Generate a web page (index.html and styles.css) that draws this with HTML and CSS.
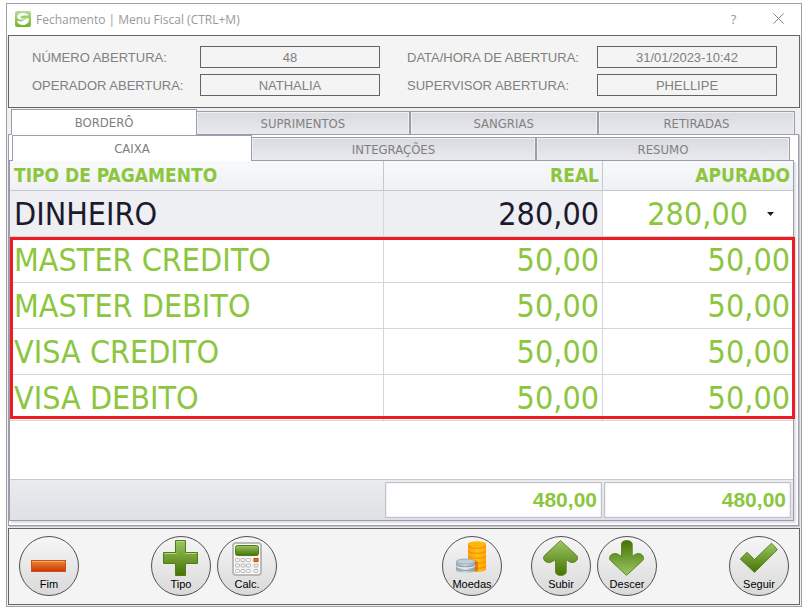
FILE: index.html
```html
<!DOCTYPE html>
<html lang="pt-BR">
<head>
  <meta charset="UTF-8">
  <meta name="viewport" content="width=device-width, initial-scale=1.0">
  <title>Fechamento | Menu Fiscal</title>
  <link rel="stylesheet" href="styles.css">
</head>
<body>

<!-- Shared icon gradients -->
<svg class="defs" width="0" height="0" aria-hidden="true">
  <defs>
    <linearGradient id="green" x1="0" y1="0" x2="0" y2="1">
      <stop offset="0" stop-color="#9cc764"/>
      <stop offset="1" stop-color="#457203"/>
    </linearGradient>
    <linearGradient id="green-up" x1="0" y1="0" x2="0" y2="1">
      <stop offset="0" stop-color="#457203"/>
      <stop offset="1" stop-color="#9cc764"/>
    </linearGradient>
    <linearGradient id="orange" x1="0" y1="0" x2="0" y2="1">
      <stop offset="0" stop-color="#f08a34"/>
      <stop offset="1" stop-color="#c93507"/>
    </linearGradient>
    <linearGradient id="logo" x1="0" y1="0" x2="0" y2="1">
      <stop offset="0" stop-color="#b9dc96"/>
      <stop offset="1" stop-color="#6fb52c"/>
    </linearGradient>
    <linearGradient id="silver" x1="0" y1="0" x2="1" y2="0">
      <stop offset="0" stop-color="#9fb0b9"/>
      <stop offset="0.5" stop-color="#d5dfe4"/>
      <stop offset="1" stop-color="#93a4ad"/>
    </linearGradient>
    <linearGradient id="gold" x1="0" y1="0" x2="1" y2="0">
      <stop offset="0" stop-color="#ff9d0a"/>
      <stop offset="0.5" stop-color="#ffc312"/>
      <stop offset="1" stop-color="#ffa408"/>
    </linearGradient>
  </defs>
</svg>

<main class="window">
  <header class="titlebar">
    <svg class="logo" viewBox="0 0 16 16" aria-hidden="true">
      <rect width="16" height="16" rx="2" fill="url(#logo)"/>
      <path d="M13.500 4.800C12.500 2.500 10 1.800 7.500 2C4 2.200 2 4 2.200 6C2.500 8.500 5 9 8 8.600C9.500 8.400 10.500 7.800 11.500 7.200C9 7.600 5.500 7.800 5.500 6.300C5.500 4.600 10 4 13.500 4.800Z" fill="#fff"/>
      <path d="M2 9.500C4.500 11 8.500 10.500 11.500 7.200L13.800 7.500C14.300 11.500 11.500 14 8 14C4.800 14 2.300 12.500 2 9.500Z" fill="#fff"/>
    </svg>
    <h1>Fechamento | Menu Fiscal (CTRL+M)</h1>
    <button class="title-btn" type="button" aria-label="Ajuda">?</button>
    <button class="title-btn" type="button" aria-label="Fechar">
      <svg width="11" height="11" viewBox="0 0 11 11"><path d="M.5 .5L10.500 10.500M10.500 .5L.5 10.500" stroke="#858585" fill="none"/></svg>
    </button>
  </header>

  <section class="info">
    <label for="numero">NÚMERO ABERTURA:</label>
    <input id="numero" type="text" value="48" readonly>
    <label class="second" for="data">DATA/HORA DE ABERTURA:</label>
    <input id="data" type="text" value="31/01/2023-10:42" readonly>
    <label for="operador">OPERADOR ABERTURA:</label>
    <input id="operador" type="text" value="NATHALIA" readonly>
    <label class="second" for="supervisor">SUPERVISOR ABERTURA:</label>
    <input id="supervisor" type="text" value="PHELLIPE" readonly>
  </section>

  <div class="tabs tabs-outer" role="tablist">
    <button class="tab active" type="button" role="tab" aria-selected="true">BORDERÔ</button>
    <button class="tab" type="button" role="tab">SUPRIMENTOS</button>
    <button class="tab" type="button" role="tab">SANGRIAS</button>
    <button class="tab" type="button" role="tab">RETIRADAS</button>
  </div>

  <section class="pane-outer">
    <div class="tabs tabs-inner" role="tablist">
      <button class="tab active" type="button" role="tab" aria-selected="true">CAIXA</button>
      <button class="tab" type="button" role="tab">INTEGRAÇÕES</button>
      <button class="tab" type="button" role="tab">RESUMO</button>
    </div>

    <div class="pane-inner">
      <table class="payments">
        <colgroup>
          <col>
          <col class="col-real">
          <col class="col-apurado">
        </colgroup>
        <thead>
          <tr><th>TIPO DE PAGAMENTO</th><th class="num">REAL</th><th class="num">APURADO</th></tr>
        </thead>
        <tbody>
          <tr class="selected">
            <td>DINHEIRO</td>
            <td class="num">280,00</td>
            <td class="editing">
              <div class="editor">
                <input type="text" value="280,00" aria-label="Apurado em dinheiro">
                <button type="button" aria-label="Abrir"><svg width="7" height="4" viewBox="0 0 7 4"><path d="M0 0H7L3.500 4Z" fill="#1c1a2e"/></svg></button>
              </div>
            </td>
          </tr>
        </tbody>
        <tbody class="highlight">
          <tr><td>MASTER CREDITO</td><td class="num">50,00</td><td class="num">50,00</td></tr>
          <tr><td>MASTER DEBITO</td><td class="num">50,00</td><td class="num">50,00</td></tr>
          <tr><td>VISA CREDITO</td><td class="num">50,00</td><td class="num">50,00</td></tr>
          <tr><td>VISA DEBITO</td><td class="num">50,00</td><td class="num">50,00</td></tr>
        </tbody>
      </table>
      <div class="totals">
        <output class="total total-real">480,00</output>
        <output class="total total-apurado">480,00</output>
      </div>
    </div>
  </section>

  <footer class="toolbar">
    <button class="tool" type="button">
      <svg viewBox="0 0 36 36" aria-hidden="true">
        <rect x=".5" y="20.500" width="34" height="11" fill="url(#orange)" stroke="#c8541c"/>
        <path d="M1.500 21.500H33.500" stroke="#f7ad6a"/>
      </svg>
      <span>Fim</span>
    </button>
    <i class="space"></i>
    <div class="group">
      <button class="tool" type="button">
        <svg viewBox="0 0 36 36" aria-hidden="true">
          <path d="M12.500 .5H22.500V12.500H34.500V23.500H22.500V35.500H12.500V23.500H.5V12.500H12.500Z" fill="url(#green)" stroke="#4f7d14"/>
          <path d="M13.500 1.500H21.500M1.500 13.500H13.500M22.500 13.500H33.500" stroke="#b3d887" fill="none"/>
        </svg>
        <span>Tipo</span>
      </button>
      <button class="tool" type="button">
        <svg viewBox="0 0 36 36" aria-hidden="true">
          <rect x="4" y="3" width="28" height="32" rx="3" fill="#f3f3f3" stroke="#b9b9b9" stroke-width="2"/>
          <rect x="5.500" y="4.500" width="25" height="29" rx="2" fill="none" stroke="#fff"/>
          <rect x="6.500" y="5.500" width="23" height="10" rx="2" fill="url(#green)" stroke="#4f7d14"/>
          <g fill="#f8f8f8" stroke="#b4b4b4">
            <rect x="6.500" y="18.500" width="4" height="3" rx="1"/><rect x="12" y="18.500" width="4" height="3" rx="1"/><rect x="17.500" y="18.500" width="4" height="3" rx="1"/>
            <rect x="6.500" y="24" width="4" height="3" rx="1"/><rect x="12" y="24" width="4" height="3" rx="1"/><rect x="17.500" y="24" width="4" height="3" rx="1"/><rect x="25" y="24" width="4" height="3" rx="1"/>
            <rect x="6.500" y="29.500" width="4" height="3" rx="1"/><rect x="12" y="29.500" width="4" height="3" rx="1"/><rect x="17.500" y="29.500" width="4" height="3" rx="1"/><rect x="25" y="29.500" width="4" height="3" rx="1"/>
          </g>
          <rect x="25" y="18.500" width="4" height="3" fill="#f07020" stroke="#c8451a"/>
        </svg>
        <span>Calc.</span>
      </button>
    </div>
    <i class="space wide"></i>
    <button class="tool" type="button">
      <svg viewBox="0 0 36 36" aria-hidden="true">
        <path d="M14 4V29C14 33 32 33 32 29V4C32 .5 14 .5 14 4Z" fill="url(#gold)"/>
        <ellipse cx="23" cy="4" rx="9" ry="2.500" fill="#ffb60c"/>
        <path d="M14 6C15 9 31 9 32 6M14 11C15 14 31 14 32 11M14 16C15 19 31 19 32 16M14 21C15 24 31 24 32 21M14 26C15 29 31 29 32 26" fill="none" stroke="#f58a00"/>
        <path d="M21 20V31.500L24 31V22Z" fill="#d95a12" opacity=".7"/>
        <path d="M2 22V30C2 34 21 34 21 30V22C21 18 2 18 2 22Z" fill="url(#silver)"/>
        <ellipse cx="11.500" cy="21.500" rx="9" ry="2.500" fill="#c3d0d7" stroke="#9eafb8"/>
        <path d="M2 24C3 27.500 20 27.500 21 24M2 28C3 31.500 20 31.500 21 28" fill="none" stroke="#8799a3"/>
        <path d="M2 25.500C3 29 20 29 21 25.500" fill="none" stroke="#eef3f5"/>
      </svg>
      <span>Moedas</span>
    </button>
    <i class="space narrow"></i>
    <div class="group">
      <button class="tool" type="button">
        <svg viewBox="0 0 36 36" aria-hidden="true">
          <path d="M17.500 .6L33.700 15.500C36 18 33.500 22.500 29.500 22.500C27 22.500 25 21 23.200 19.500V32C23.200 36.600 12.500 36.600 12.500 32V19.500C10.500 21 8.500 22.500 6 22.500C1.500 22.500 -1 18 1.500 15.500Z" fill="url(#green)" stroke="#5b8a22"/>
        </svg>
        <span>Subir</span>
      </button>
      <button class="tool" type="button">
        <svg viewBox="0 0 36 36" aria-hidden="true">
          <path d="M17.500 35.400L33.700 20.500C36 18 33.500 13.500 29.500 13.500C27 13.500 25 15 23.200 16.500V4C23.200 -.6 12.500 -.6 12.500 4V16.500C10.500 15 8.500 13.500 6 13.500C1.500 13.500 -1 18 1.500 20.500Z" fill="url(#green-up)" stroke="#5b8a22"/>
        </svg>
        <span>Descer</span>
      </button>
    </div>
    <i class="space"></i>
    <button class="tool" type="button">
      <svg viewBox="0 0 36 36" aria-hidden="true">
        <path d="M-.8 19L6 12.300L13.500 19.500L30.500 3.200L36.500 9.600L13.500 32.500Z" fill="url(#green)" stroke="#5b8a22"/>
      </svg>
      <span>Seguir</span>
    </button>
  </footer>
</main>

</body>
</html>
```
FILE: styles.css
```css
/* General Styles */
* {
  box-sizing: border-box;
}
body {
  margin: 0;
  padding: 3px 3px 4px 6px;
  min-height: 100vh;
  display: flex;
  background: #fff;
  font-family: "DejaVu Sans Condensed", "DejaVu Sans", Tahoma, sans-serif;
  font-size: 13px;
  color: #808080;
}
button, input {
  margin: 0;
  padding: 0;
  border: none;
  background: none;
  font: inherit;
  color: inherit;
}
.defs {
  position: absolute;
}
.window {
  flex: 1;
  min-width: 0;
  display: flex;
  flex-direction: column;
  border: 1px solid #a0a0a0;
  padding: 0 1px 1px;
  background: #f0f0f0;
}

/* Title bar */
.titlebar {
  display: flex;
  align-items: center;
  height: 31px;
  margin: 0 -1px;
  padding: 0 0 1px 8px;
  background: #fff;
  font-family: "Open Sans", "Segoe UI", sans-serif;
  color: #999;
}
.titlebar h1 {
  flex: 1;
  margin: 0 0 0 5px;
  font-size: 12px;
  font-weight: normal;
}
.logo {
  width: 16px;
  height: 16px;
}
.title-btn {
  width: 45px;
  height: 30px;
}

/* Opening data */
.info {
  display: grid;
  grid-template-columns: 168px 1fr 217px 1fr;
  align-content: start;
  align-items: center;
  row-gap: 6px;
  height: 73px;
  padding: 10px 22px 0 23px;
  border: 1px solid #646464;
  background: #f4f4f4;
  font-family: "Liberation Sans", Arial, sans-serif;
}
.info .second {
  padding-left: 27px;
}
.info input {
  width: 100%;
  height: 22px;
  border: 1px solid #646464;
  text-align: center;
}

/* Tabs */
.tabs {
  display: grid;
  align-items: end;
}
.tabs-outer {
  grid-template-columns: 186fr 213fr 188fr 196fr;
  margin: 1px 5px 0 3px;
}
.tabs-inner {
  grid-template-columns: 240fr 285fr 253fr;
  margin: 0 4px 0 3px;
}
.tab {
  height: 23px;
  border: 1px solid #9b9dae;
  border-left-width: 0;
  border-right-width: 2px;
  border-bottom: none;
  background: linear-gradient(#d9dae0, #e9eaee);
  box-shadow: inset 1px 1px #eeeff2, inset -1px 0 #eeeff2;
}
.tab:last-child {
  border-right-width: 1px;
}
.tab.active {
  height: 26px;
  margin-bottom: -1px;
  position: relative;
  border-width: 1px 1px 0;
  background: #fff;
  box-shadow: none;
}

/* Panes */
.pane-outer {
  flex: 1;
  display: flex;
  flex-direction: column;
  margin-right: 1px;
  padding: 0 4px 4px 0;
  border: 1px solid #9b9dae;
  background: #fff;
  box-shadow: 1px 1px 1px #c4c4ca;
}
.pane-inner {
  flex: 1;
  display: flex;
  flex-direction: column;
  border: 1px solid #9b9dae;
  background: #fff;
  box-shadow: 2px 2px 2px #dcdce0;
}

/* Payments table */
.payments {
  width: 100%;
  table-layout: fixed;
  border-spacing: 0;
  color: #8cc63f;
}
.col-real {
  width: 219px;
}
.col-apurado {
  width: 190px;
}
.payments th {
  height: 30px;
  padding: 0 3px 2px 4px;
  border-bottom: 1px solid #c6c7cf;
  border-right: 1px solid #c6c7cf;
  background: linear-gradient(#f8f9fa, #f0f1f4);
  font-size: 19px;
  line-height: 22px;
  text-align: left;
}
.payments td {
  height: 46px;
  padding: 0 3px 0 4px;
  border-bottom: 1px solid #d5d6dc;
  border-right: 1px solid #d5d6dc;
  font-size: 32px;
  line-height: 38px;
  white-space: nowrap;
}
.payments th:last-child,
.payments td:last-child {
  border-right: none;
}
.payments .num {
  text-align: right;
}
.payments .selected td {
  background: #eeeff2;
  color: #1c1a2e;
}
.payments .selected .editing {
  padding: 0;
  background: #fff;
  color: #8cc63f;
}
.editor {
  display: flex;
}
.editor input {
  flex: 1;
  min-width: 0;
  height: 38px;
  text-align: right;
}
.editor button {
  display: flex;
  align-items: center;
  justify-content: center;
  width: 45px;
}
/* Red frame around the card rows */
.highlight {
  position: relative;
}
.highlight::after {
  content: "";
  position: absolute;
  inset: 0 -2px 2px 0;
  border: 3px solid #ed1c24;
  pointer-events: none;
}

/* Totals */
.totals {
  display: flex;
  justify-content: flex-end;
  gap: 2px;
  margin-top: auto;
  padding: 2px 2px 2px 0;
  border-top: 1px solid #c6c7cf;
  background: linear-gradient(#eaebee, #dfe0e5);
}
.total {
  height: 36px;
  padding-right: 4px;
  border: 1px solid #c0c1ca;
  background: #fff;
  box-shadow: inset 0 0 2px #d0d0d8;
  color: #8cc63f;
  font: bold 21px/34px "Liberation Sans", Arial, sans-serif;
  text-align: right;
}
.total-real {
  width: 217px;
}
.total-apurado {
  width: 187px;
}

/* Bottom toolbar */
.toolbar {
  display: flex;
  margin-top: 2px;
  padding: 7px 10px 8px;
  border: 1px solid #646464;
  background: #f4f4f4;
}
.group {
  display: flex;
  gap: 6px;
}
.space {
  flex: 72;
}
.space.wide {
  flex: 165;
}
.space.narrow {
  flex: 29;
}
.tool {
  display: flex;
  flex-direction: column;
  align-items: center;
  width: 60px;
  height: 60px;
  padding-top: 3px;
  border: 1px solid #505050;
  border-radius: 50%;
  background: linear-gradient(#f6f6f6, #d9d9d9);
  color: #000;
  font-family: "Liberation Sans", Arial, sans-serif;
  font-size: 11px;
  line-height: 14px;
}
.tool svg {
  width: 36px;
  height: 36px;
  overflow: visible;
}
.tool span {
  margin-top: 1px;
}
```
